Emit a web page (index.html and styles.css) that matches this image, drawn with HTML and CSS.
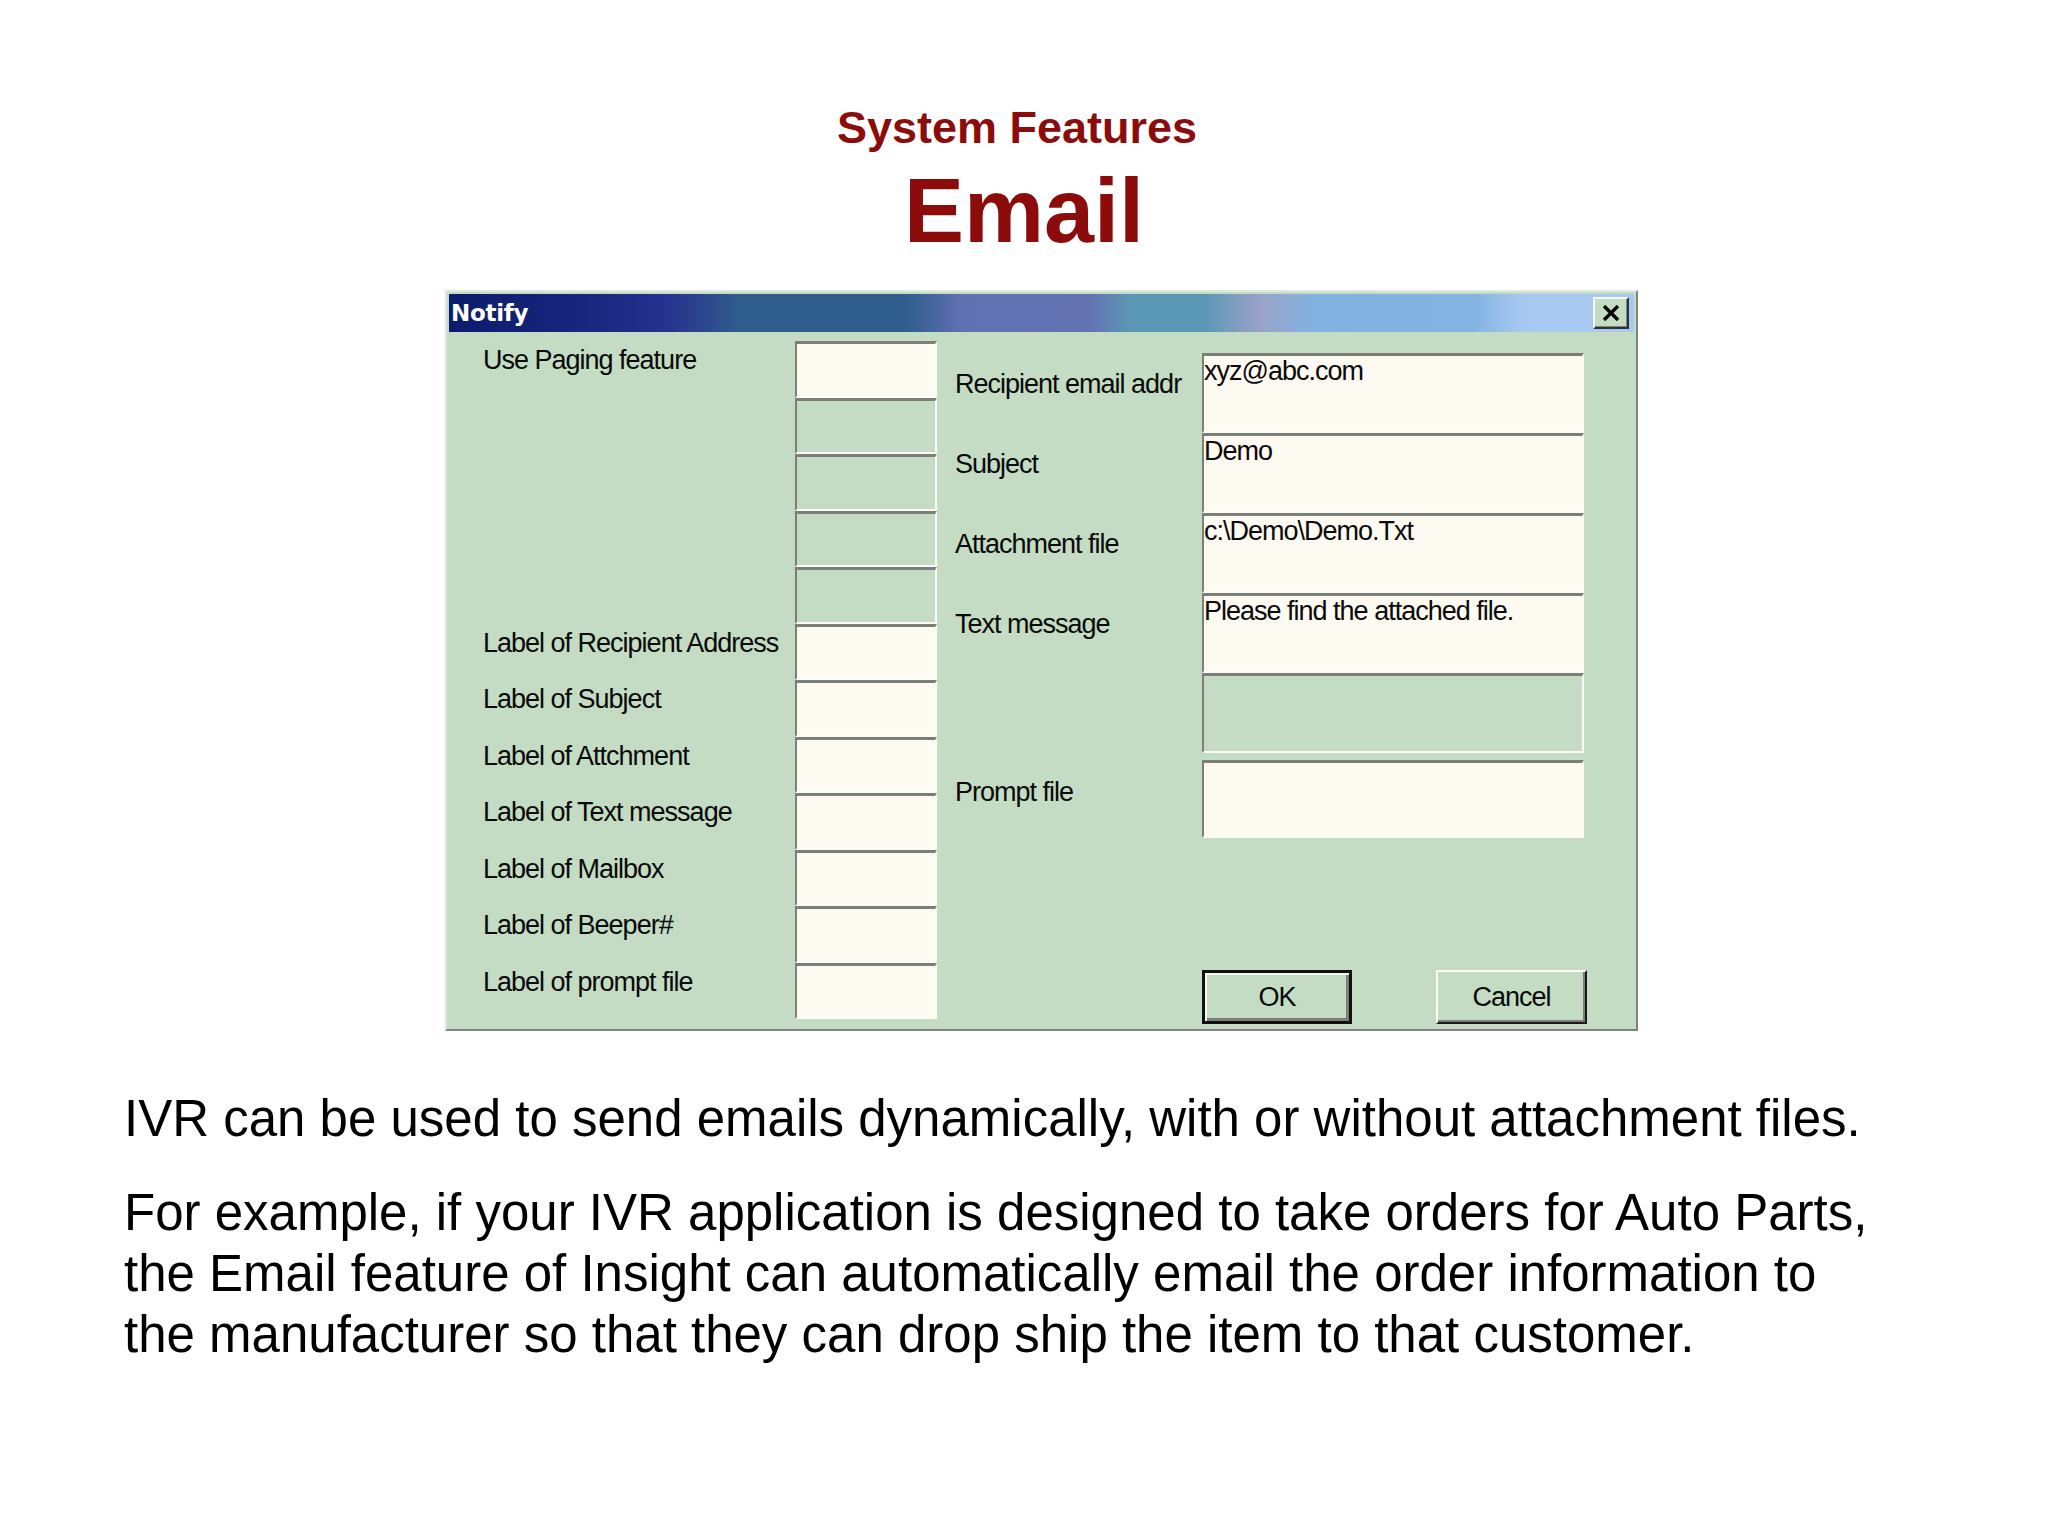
FILE: index.html
```html
<!DOCTYPE html>
<html lang="en">
<head>
<meta charset="utf-8">
<title>System Features - Email</title>
<link rel="stylesheet" href="styles.css">
</head>
<body>
<div class="page">
  <header class="heading">
    <div class="kicker">System Features</div>
    <h1 class="title">Email</h1>
  </header>

  <div class="dialog">
    <div class="titlebar">
      <span class="caption">Notify</span>
      <span class="close">
        <svg width="18" height="16" viewBox="0 0 18 16"><path d="M2 1 L16 15 M16 1 L2 15" stroke="#000" stroke-width="3.4" fill="none"/></svg>
      </span>
    </div>
    <div class="dlg-body">
      <div class="left-panel">
        <div class="lbl">Use Paging feature</div><div class="box cream"></div>
        <div class="lbl"></div><div class="box green"></div>
        <div class="lbl"></div><div class="box green"></div>
        <div class="lbl"></div><div class="box green"></div>
        <div class="lbl"></div><div class="box green"></div>
        <div class="lbl">Label of Recipient Address</div><div class="box cream"></div>
        <div class="lbl">Label of Subject</div><div class="box cream"></div>
        <div class="lbl">Label of Attchment</div><div class="box cream"></div>
        <div class="lbl">Label of Text message</div><div class="box cream"></div>
        <div class="lbl">Label of Mailbox</div><div class="box cream"></div>
        <div class="lbl">Label of Beeper#</div><div class="box cream"></div>
        <div class="lbl">Label of prompt file</div><div class="box cream"></div>
      </div>
      <div class="right-panel">
        <div class="right-grid">
          <div class="rlbl">Recipient email addr</div><div class="box cream">xyz@abc.com</div>
          <div class="rlbl">Subject</div><div class="box cream">Demo</div>
          <div class="rlbl">Attachment file</div><div class="box cream">c:\Demo\Demo.Txt</div>
          <div class="rlbl">Text message</div><div class="box cream">Please find the attached file.</div>
          <div class="rlbl"></div><div class="box green"></div>
          <div class="rlbl prompt">Prompt file</div><div class="box cream spaced"></div>
        </div>
        <div class="buttons">
          <button class="btn default">OK</button>
          <button class="btn">Cancel</button>
        </div>
      </div>
    </div>
  </div>

  <section class="copy">
    <p>IVR can be used to send emails dynamically, with or without attachment files.</p>
    <p>For example, if your IVR application is designed to take orders for Auto Parts, the Email feature of Insight can automatically email the order information to the manufacturer so that they can drop ship the item to that customer.</p>
  </section>
</div>
</body>
</html>
```
FILE: styles.css
```css
html, body {
  margin: 0;
  padding: 0;
  background: #ffffff;
}

.page {
  width: 2048px;
  height: 1536px;
  padding-top: 105px;
  box-sizing: border-box;
  font-family: "Liberation Sans", Arial, sans-serif;
  color: #000;
}

.heading {
  text-align: center;
  color: #8c0b0b;
  font-weight: bold;
}

.kicker {
  font-size: 45px;
  line-height: 45px;
  padding-right: 14px;
}

.title {
  margin: 16px 0 0 0;
  font-size: 90px;
  line-height: 90px;
  font-weight: bold;
}

/* ---------- dialog ---------- */
.dialog {
  margin: 34px 0 0 445px;
  width: 1193px;
  box-sizing: border-box;
  border: 2px solid;
  border-color: #dfeadf #7e837c #7e837c #dfeadf;
  padding: 2px;
  background: #c3dcc3;
  font-family: "Liberation Sans", Arial, sans-serif;
  font-size: 27px;
  line-height: 30px;
  letter-spacing: -1px;
  color: #0a0a0a;
}

.titlebar {
  height: 38px;
  display: flex;
  align-items: center;
  justify-content: space-between;
  padding: 0 5px 0 2px;
  background: linear-gradient(90deg,
    #0c1c6c 0%,
    #16247a 10%,
    #25318e 18%,
    #2c4a8e 22%,
    #2f5e8c 24.5%,
    #2f5e8c 38.6%,
    #4866a0 41%,
    #6070b0 43.1%,
    #6472b2 54%,
    #5b98b6 57.5%,
    #5b98b6 63.8%,
    #9aa2c8 68.4%,
    #82b2e0 72.7%,
    #84b4e2 86.6%,
    #a6c8f0 90.4%,
    #a8caf2 100%);
}

.caption {
  font-family: "DejaVu Sans", Verdana, sans-serif;
  font-weight: bold;
  font-size: 23px;
  line-height: 23px;
  color: #ffffff;
  letter-spacing: -0.3px;
}

.close {
  width: 36px;
  height: 32px;
  box-sizing: border-box;
  display: flex;
  align-items: center;
  justify-content: center;
  background: #c3dcc3;
  border: 2px solid;
  border-color: #f4f8f2 #303330 #303330 #f4f8f2;
  box-shadow: inset -1px -1px 0 #7e837c;
}

.dlg-body {
  height: 695px;
  display: flex;
}

.left-panel {
  padding: 9px 0 0 34px;
  display: grid;
  grid-template-columns: 312px 142px;
  grid-template-rows: repeat(12, 56.5px);
}

.lbl {
  padding-top: 4px;
  white-space: nowrap;
}

.box {
  box-sizing: border-box;
  border-style: solid;
  border-width: 3px 2px 2px 2px;
  border-color: #7b7f78 #fbfcf6 #fbfcf6 #7b7f78;
  padding: 0;
  white-space: nowrap;
  overflow: hidden;
}

.cream {
  background: #fdfaf1;
}

.green {
  background: #c3dcc3;
}

.right-panel {
  padding-top: 21px;
  display: flex;
  flex-direction: column;
}

.right-grid {
  display: grid;
  grid-template-columns: 265px 382px;
  grid-template-rows: 80px 80px 80px 80px 80px 85px;
}

.rlbl {
  padding: 16px 0 0 18px;
  white-space: nowrap;
}

.rlbl.prompt {
  padding-top: 24px;
}

.spaced {
  margin-top: 7px;
}

.buttons {
  margin-top: 132px;
  padding-left: 265px;
  display: flex;
  gap: 84px;
}

.btn {
  width: 151px;
  height: 54px;
  box-sizing: border-box;
  background: #c3dcc3;
  font-family: inherit;
  font-size: 27px;
  line-height: 30px;
  letter-spacing: -1px;
  color: #0a0a0a;
  padding: 0;
  border: 2px solid;
  border-color: #fbfcf6 #1a1a1a #1a1a1a #fbfcf6;
  box-shadow: inset -2px -2px 0 #7b7f78;
}

.btn.default {
  width: 150px;
  border: 3px solid #111;
  box-shadow: inset 2px 2px 0 #f2f6ef, inset -3px -3px 0 #7b7f78;
}

/* ---------- copy ---------- */
.copy {
  margin-top: 57px;
  padding-left: 124px;
  width: 1770px;
  font-size: 51px;
  line-height: 61px;
}

.copy p {
  margin: 0 0 33px 0;
}
```
